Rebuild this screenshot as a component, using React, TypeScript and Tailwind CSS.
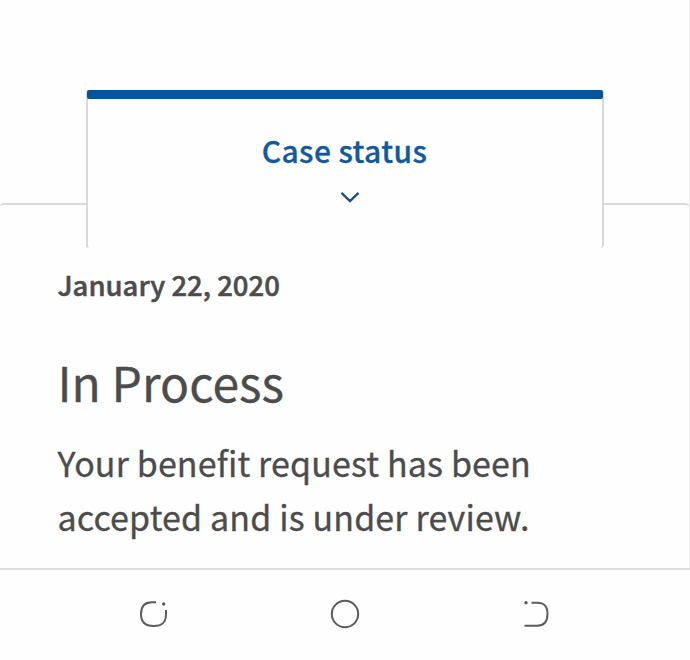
const CaseTab: React.FC = () => {
  return (
    <button
      type="button"
      className="relative z-10 -mb-[45px] flex h-[158px] w-[518px] flex-col items-center rounded-[3px] border-x-2 border-[#d9d9d9] bg-[#fefefe]"
    >
      <span className="-mx-px h-[9px] w-[516px] rounded-[2px] bg-[#04549c]" />
      <span className="mt-[31px] text-[30px] leading-10 font-medium tracking-[0.4px] text-[#14599a] [-webkit-text-stroke:0.3px]">
        Case status
      </span>
      <svg
        className="mt-[19px] ml-[10px]"
        width="22"
        height="16"
        viewBox="0 0 22 16"
        fill="none"
        stroke="#1c4f85"
        strokeWidth="2.4"
      >
        <path d="M2.5 3.8 11 12l8.5-8.2" />
      </svg>
    </button>
  );
};

const StatusCard: React.FC = () => {
  return (
    <section className="h-[365px] w-full rounded-t-[4px] border-t-2 border-[#d9d9d9] pt-[63px] pl-[57.5px] text-[#4c4c4c]">
      <p className="text-[27.5px] leading-8 font-medium [-webkit-text-stroke:0.5px]">January 22, 2020</p>
      <h1 className="mt-[53px] text-[48px] leading-14 font-normal [-webkit-text-stroke:0.3px]">In Process</h1>
      <p className="mt-[27px] text-[34px] leading-[54px] tracking-[0.14px] whitespace-nowrap [-webkit-text-stroke:0.3px]">
        Your benefit request has been
        <br />
        accepted and is under review.
      </p>
    </section>
  );
};

const SystemBar: React.FC = () => {
  return (
    <nav className="flex h-[92px] items-start justify-between border-t-2 border-[#dedede] px-[138px] pt-[28px]">
      <svg width="32" height="32" viewBox="0 0 32 32" fill="none" stroke="#5c5c5c" strokeWidth="2">
        <path d="M18 4.300H14C6.500 4.300 3 8 3 16s3.500 12 12.500 12S28 24.500 28 16v-4" />
        <circle cx="25.700" cy="6" r="1.700" fill="#5c5c5c" stroke="none" />
      </svg>
      <svg width="32" height="32" viewBox="0 0 32 32" fill="none" stroke="#5c5c5c" strokeWidth="2">
        <circle cx="16" cy="16" r="13.200" />
      </svg>
      <svg width="32" height="32" viewBox="0 0 32 32" fill="none" stroke="#5c5c5c" strokeWidth="2">
        <path d="M11.500 4.800H17c7.500 0 10.500 3.500 10.500 11.200S24.500 27.700 17 27.700H4.500" />
        <circle cx="6" cy="4.800" r="1.700" fill="#5c5c5c" stroke="none" />
      </svg>
    </nav>
  );
};

const App: React.FC = () => {
  return (
    <div className="h-[660px] w-[690px] overflow-hidden bg-[#fefefe] font-['Noto_Sans_CJK_SC',sans-serif]">
      <main className="flex h-[568px] flex-col items-center border-r border-[#ececec] pt-[90px]">
        <CaseTab />
        <StatusCard />
      </main>
      <SystemBar />
    </div>
  );
};

export default App;
